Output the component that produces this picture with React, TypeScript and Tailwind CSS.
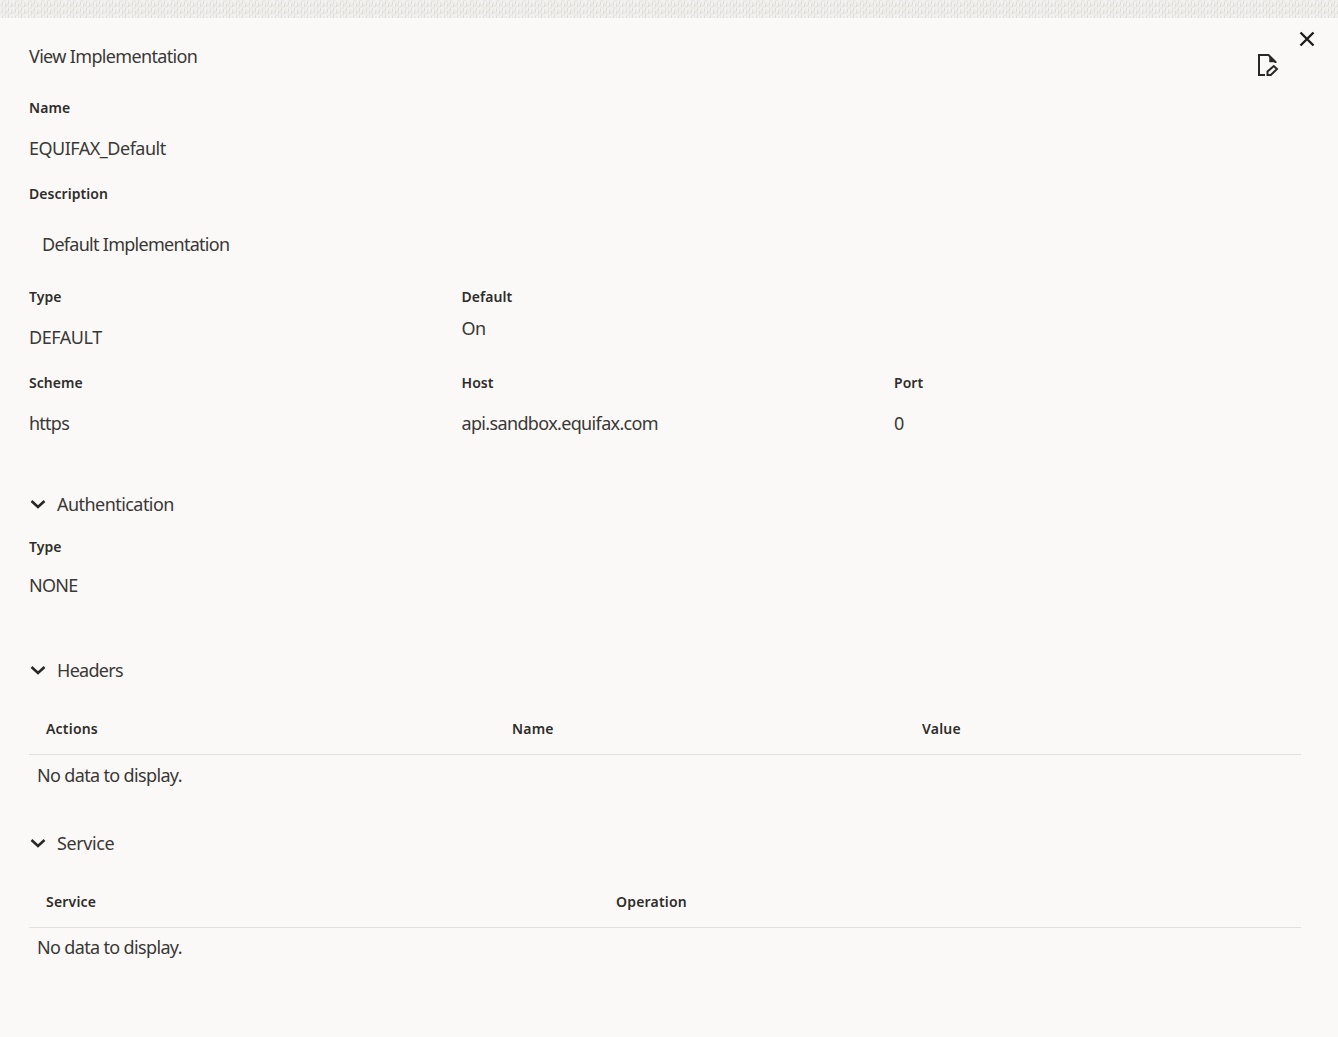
import React from "react";

const Label = ({ children, className = "" }: { children: React.ReactNode; className?: string }) => (
  <div className={`h-[20px] leading-[20px] text-[14px] font-semibold text-[#2f2d2a] tracking-[0.05px] ${className}`}>{children}</div>
);
const Value = ({ children, className = "" }: { children: React.ReactNode; className?: string }) => (
  <div className={`leading-[24px] text-[18px] text-[#3a3835] ${className}`}>{children}</div>
);
const Chevron = () => (
  <svg width="18" height="18" viewBox="0 0 18 18" fill="none" stroke="#2a2826" strokeWidth="2.6" className="shrink-0">
    <path d="M2.5 6 L9 12 L15.5 6" />
  </svg>
);
const Section = ({ title, className = "", track }: { title: string; className?: string; track: string }) => (
  <div className={`flex items-center gap-[10px] h-[24px] ${className}`}>
    <Chevron />
    <span className={`text-[18px] leading-[24px] text-[#3a3835] ${track}`}>{title}</span>
  </div>
);

export default function App() {
  return (
    <div className="relative w-[1338px] h-[1037px] overflow-hidden bg-[#fbf9f8]" style={{ fontFamily: '"Noto Sans", sans-serif' }}>
      <div className="h-[18px] bg-[#ebe9e6]">
        <svg width="1338" height="18" className="block">
          <defs>
            <pattern id="tex" width="13" height="7" patternUnits="userSpaceOnUse">
              <path d="M1 0v4M4 2v5M7 0v3M10 1v5M12 0v2" stroke="#f8f6f4" strokeWidth="1.3" />
              <path d="M2.5 2v3M5.5 4v3M8.5 1v3M11.5 4v3" stroke="#dad7d3" strokeWidth="0.8" />
            </pattern>
          </defs>
          <rect width="1338" height="18" fill="url(#tex)" />
        </svg>
      </div>

      <button className="absolute left-[1297px] top-[29px] w-[20px] h-[20px]" aria-label="Close">
        <svg width="20" height="20" viewBox="0 0 20 20" fill="none" stroke="#1f1d1b" strokeWidth="2.4">
          <path d="M3.5 3.5 L16.5 16.5 M16.5 3.5 L3.5 16.5" />
        </svg>
      </button>
      <button className="absolute left-[1256px] top-[52px] w-[24px] h-[26px]" aria-label="Edit">
        <svg width="24" height="26" viewBox="0 0 24 26" fill="none" stroke="#2a2826" strokeWidth="2">
          <path d="M9 23 H3 V3 H12.5 L19.5 10 V11" />
          <path d="M13.5 4.5 L18.5 10 H13.5 Z" fill="#2a2826" strokeWidth="0.5" />
          <path d="M11.5 23 L11.5 19.5 L17.8 14 L21 17 L14.8 23 Z" strokeWidth="2" />
        </svg>
      </button>

      <main className="pl-[29px] pr-[37px]">
        <div className="pt-[26px] h-[80px]">
          <div className="text-[18px] leading-[24px] text-[#3a3835] tracking-[-0.66px]">View Implementation</div>
        </div>

        <div className="h-[86px]">
          <Label>Name</Label>
          <Value className="mt-[18px] tracking-[-0.5px]">EQUIFAX_Default</Value>
        </div>
        <div className="h-[103px]">
          <Label>Description</Label>
          <Value className="mt-[28px] ml-[13px] tracking-[-0.72px]">Default Implementation</Value>
        </div>

        <div className="grid grid-cols-[432.5px_432.5px_1fr] h-[86px]">
          <div>
            <Label>Type</Label>
            <Value className="mt-[18px] tracking-[-0.45px]">DEFAULT</Value>
          </div>
          <div>
            <Label>Default</Label>
            <Value className="mt-[9px] tracking-[-0.45px]">On</Value>
          </div>
        </div>

        <div className="grid grid-cols-[432.5px_432.5px_1fr] h-[119px]">
          <div>
            <Label>Scheme</Label>
            <Value className="mt-[18px] tracking-[-0.75px]">https</Value>
          </div>
          <div>
            <Label>Host</Label>
            <Value className="mt-[18px] tracking-[-0.65px]">api.sandbox.equifax.com</Value>
          </div>
          <div>
            <Label>Port</Label>
            <Value className="mt-[18px]">0</Value>
          </div>
        </div>

        <Section title="Authentication" track="tracking-[-0.55px]" />
        <div className="mt-[21px] h-[121px]">
          <Label>Type</Label>
          <Value className="mt-[16px] tracking-[-0.7px]">NONE</Value>
        </div>

        <Section title="Headers" track="tracking-[-0.7px]" />
        <div className="mt-[37px] h-[36px] border-b border-[#e2e0dd] flex text-[14px] leading-[20px] font-semibold text-[#2f2d2a] tracking-[0.2px]">
          <div className="w-[483px] pl-[17px]">Actions</div>
          <div className="w-[410px]">Name</div>
          <div>Value</div>
        </div>
        <Value className="mt-[8px] ml-[8px] tracking-[-0.65px]">No data to display.</Value>

        <Section title="Service" className="mt-[44px]" track="tracking-[-0.4px]" />
        <div className="mt-[37px] h-[36px] border-b border-[#e2e0dd] flex text-[14px] leading-[20px] font-semibold text-[#2f2d2a] tracking-[0.2px]">
          <div className="w-[587px] pl-[17px]">Service</div>
          <div>Operation</div>
        </div>
        <Value className="mt-[7px] ml-[8px] tracking-[-0.65px]">No data to display.</Value>
      </main>
    </div>
  );
}
